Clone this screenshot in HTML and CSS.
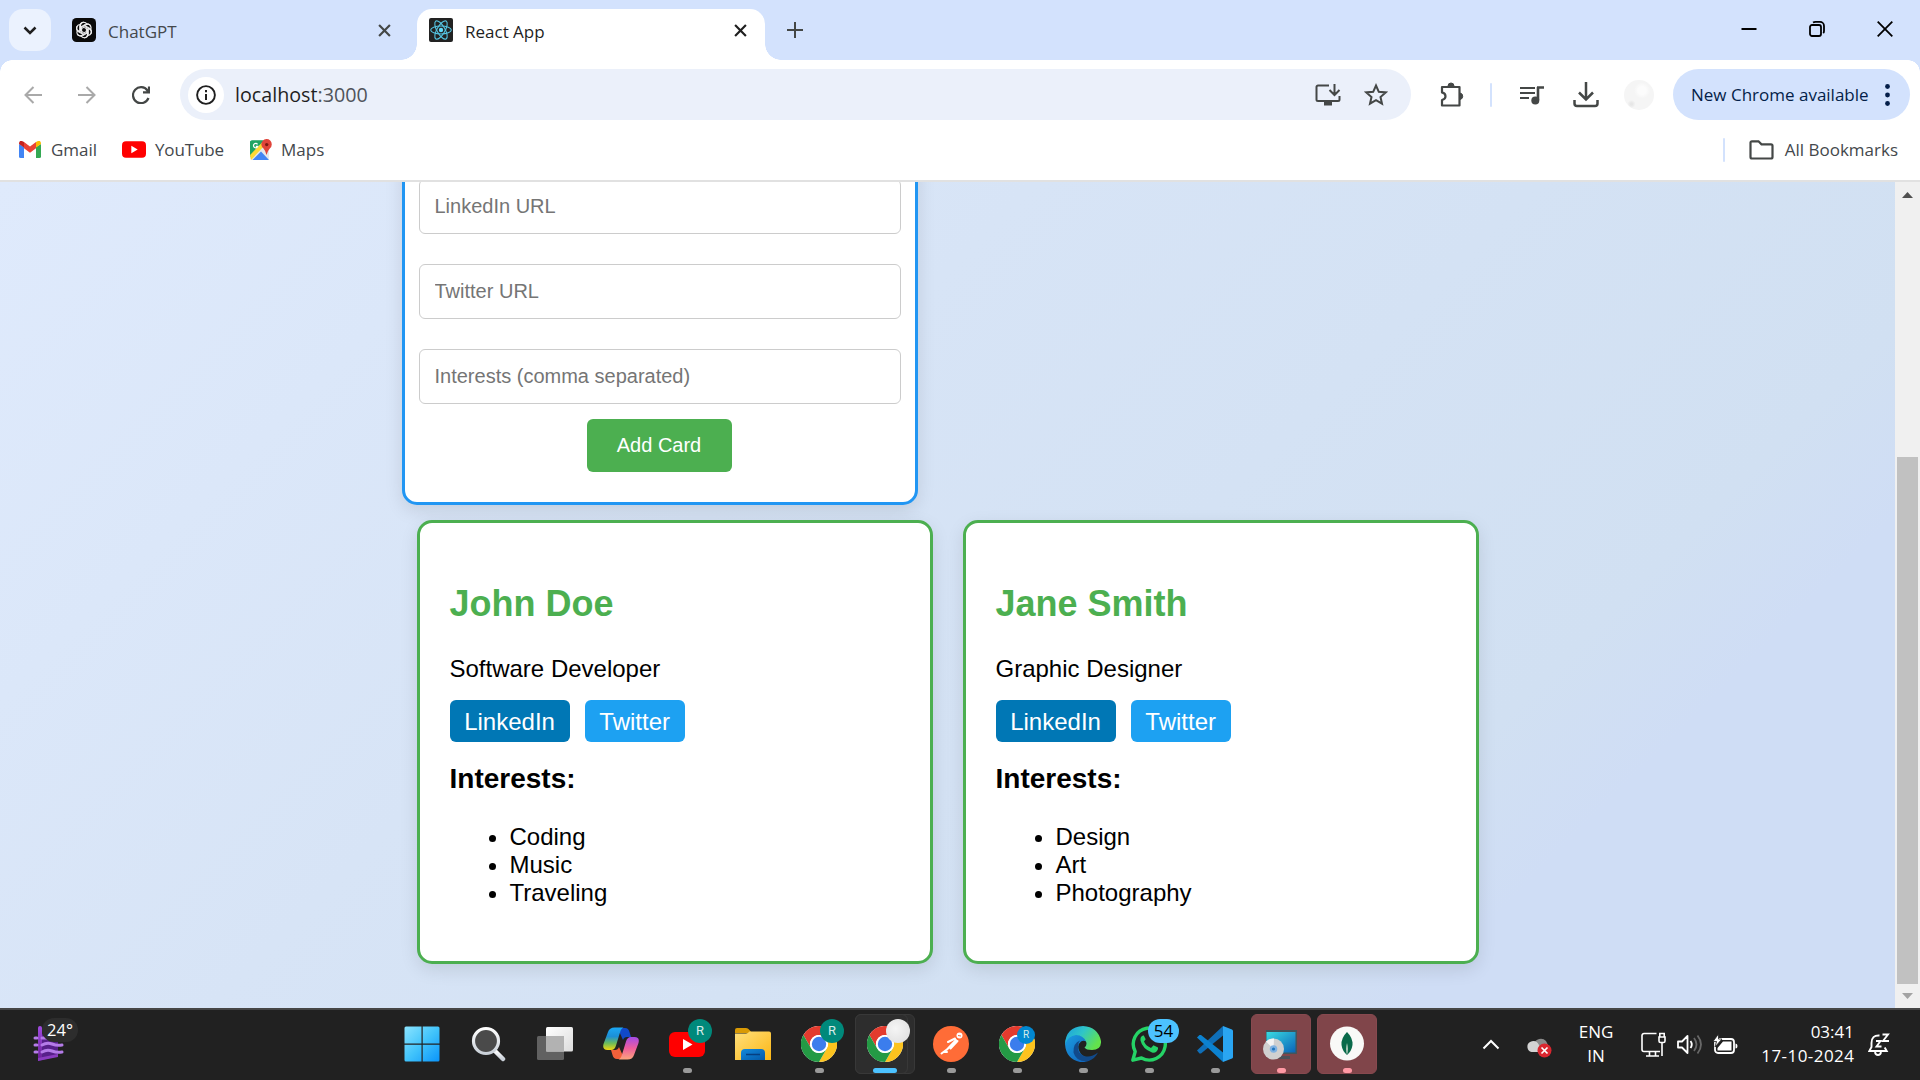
FILE: index.html
```html
<!DOCTYPE html>
<html lang="en">
<head>
<meta charset="utf-8">
<title>React App</title>
<link rel="stylesheet" href="styles.css">
</head>
<body>
<svg class="defs" width="0" height="0" aria-hidden="true">
  <defs>
    <linearGradient id="winG" x1="0" y1="0" x2="1" y2="1"><stop offset="0" stop-color="#8be4ff"/><stop offset=".5" stop-color="#42c4fb"/><stop offset="1" stop-color="#0a94fa"/></linearGradient>
    <linearGradient id="glassG" x1="0" y1="0" x2="0" y2="1"><stop offset="0" stop-color="#fff"/><stop offset="1" stop-color="#c9d0d8"/></linearGradient>
    <linearGradient id="paneG" x1="0" y1="0" x2="1" y2="1"><stop offset="0" stop-color="#fff"/><stop offset="1" stop-color="#dcdcdc"/></linearGradient>
    <linearGradient id="copA" x1="0" y1="0" x2="0" y2="1"><stop offset="0" stop-color="#1ba8f5"/><stop offset=".4" stop-color="#1c8fd6"/><stop offset=".7" stop-color="#6cbb5a"/><stop offset="1" stop-color="#f2d510"/></linearGradient>
    <linearGradient id="copB" x1="0" y1="0" x2="0" y2="1"><stop offset="0" stop-color="#a34be8"/><stop offset=".5" stop-color="#ee5d9c"/><stop offset="1" stop-color="#fca57c"/></linearGradient>
    <linearGradient id="folG" x1="0" y1="0" x2="1" y2="1"><stop offset="0" stop-color="#ffe07c"/><stop offset="1" stop-color="#fcb614"/></linearGradient>
    <linearGradient id="folB" x1="0" y1="0" x2="1" y2="1"><stop offset="0" stop-color="#1289dc"/><stop offset="1" stop-color="#0459a8"/></linearGradient>
    <linearGradient id="edgA" x1="0" y1="0" x2="1" y2=".5"><stop offset="0" stop-color="#1a9ddf"/><stop offset=".5" stop-color="#2fc5c8"/><stop offset="1" stop-color="#63e24c"/></linearGradient>
    <linearGradient id="edgB" x1="0" y1="0" x2="1" y2="1"><stop offset="0" stop-color="#1b9de2"/><stop offset="1" stop-color="#0f5cb5"/></linearGradient>
    <linearGradient id="scrG" x1="0" y1="0" x2="1" y2="1"><stop offset="0" stop-color="#39dbe2"/><stop offset="1" stop-color="#0a63b8"/></linearGradient>
    <linearGradient id="windG" x1="0" y1="0" x2="0" y2="1"><stop offset="0" stop-color="#a04be0"/><stop offset="1" stop-color="#6b1f98"/></linearGradient>
    <symbol id="chrome" viewBox="0 0 36 36">
      <circle cx="18" cy="18" r="18" fill="#fff"/>
      <path d="M18 9H33.6A18 18 0 0 0 2.400 9L10.200 22.500A9 9 0 0 1 18 9z" fill="#e33b2e"/>
      <path d="M25.800 22.500L18 36A18 18 0 0 0 33.600 9H18A9 9 0 0 1 25.800 22.500z" fill="#fcc31e"/>
      <path d="M10.200 22.500L2.400 9A18 18 0 0 0 18 36l7.800-13.500A9 9 0 0 1 10.200 22.500z" fill="#249a45"/>
      <circle cx="18" cy="18" r="9" fill="#fff"/><circle cx="18" cy="18" r="7.200" fill="#3b7ded"/>
    </symbol>
    <symbol id="yt" viewBox="0 0 36 25"><rect width="36" height="25" rx="6" fill="#f00"/><path d="M14 7v11l9.500-5.500z" fill="#fff"/></symbol>
    <symbol id="cross" viewBox="0 0 12 12"><path d="M1 1l10 10M11 1L1 11" fill="none" stroke="currentColor" stroke-width="2"/></symbol>
  </defs>
</svg>

<header class="tabstrip">
  <div class="tab-search"><svg width="14" height="9" viewBox="0 0 14 9"><path d="M1.500 1.500L7 7l5.500-5.500" fill="none" stroke="#1f1f1f" stroke-width="2.500"/></svg></div>
  <div class="tab">
    <svg class="favicon" viewBox="0 0 24 24"><rect width="24" height="24" rx="4.500" fill="#0a0a0a"/>
      <g fill="none" stroke="#f0f0f0" stroke-width="1.100">
        <path id="petal" d="M7.700 13.800V8.200a3.900 3.900 0 0 1 7.300-1.900M9.600 12.900V9.300l4.500-2.600a3.900 3.900 0 0 1 4.700 1"/>
        <use href="#petal" transform="rotate(60 12 12)"/><use href="#petal" transform="rotate(120 12 12)"/><use href="#petal" transform="rotate(180 12 12)"/><use href="#petal" transform="rotate(240 12 12)"/><use href="#petal" transform="rotate(300 12 12)"/>
      </g></svg>
    <span class="tab-title">ChatGPT</span>
    <svg class="close" width="13" height="13"><use href="#cross"/></svg>
  </div>
  <div class="tab active">
    <svg class="favicon" viewBox="0 0 24 24"><rect width="24" height="24" rx="2" fill="#222"/><g fill="none" stroke="#55c5e3" stroke-width="1.100"><ellipse cx="12" cy="12" rx="10.300" ry="4"/><ellipse cx="12" cy="12" rx="10.300" ry="4" transform="rotate(60 12 12)"/><ellipse cx="12" cy="12" rx="10.300" ry="4" transform="rotate(120 12 12)"/></g><circle cx="12" cy="12" r="2.200" fill="#61dafb"/></svg>
    <span class="tab-title">React App</span>
    <svg class="close" width="13" height="13"><use href="#cross"/></svg>
  </div>
  <svg class="new-tab" width="16" height="16" viewBox="0 0 16 16"><path d="M8 0v16M0 8h16" stroke="#444746" stroke-width="2"/></svg>
  <div class="win-controls">
    <svg width="16" height="16" viewBox="0 0 16 16"><path d="M0.500 8h15" stroke="#000" stroke-width="2"/></svg>
    <svg width="16" height="16" viewBox="0 0 16 16" fill="none" stroke="#000" stroke-width="1.800"><rect x="1" y="4" width="11" height="11" rx="2"/><path d="M4 1.500Q5 .9 6.500.9H11a4 4 0 0 1 4 4v5q0 1.500-.8 2.200"/></svg>
    <svg width="16" height="16" viewBox="0 0 16 16"><path d="M.7.700l14.600 14.600M15.300.700L.7 15.300" stroke="#000" stroke-width="1.800"/></svg>
  </div>
</header>

<div class="toolbar">
  <svg class="nav" viewBox="0 0 18 18" fill="none" stroke="#a9a9a9" stroke-width="2"><path d="M18 9H1.500M9.500 1L1.500 9l8 8"/></svg>
  <svg class="nav" viewBox="0 0 18 18" fill="none" stroke="#a9a9a9" stroke-width="2"><path d="M0 9h16.500M8.500 1l8 8-8 8"/></svg>
  <svg class="nav" viewBox="0 0 18 18" fill="none" stroke="#444746" stroke-width="2.200"><path d="M16.500 12A8 8 0 1 1 15.500 4.500l1 1.500M17 .5V6.300H11"/></svg>
  <div class="omnibox">
    <div class="site-info"><svg width="20" height="20" viewBox="0 0 20 20"><circle cx="10" cy="10" r="8.900" fill="none" stroke="#1f1f1f" stroke-width="1.900"/><path d="M10 9v6M10 5v2.200" stroke="#1f1f1f" stroke-width="2"/></svg></div>
    <span class="url">localhost<span class="port">:3000</span></span>
    <svg class="install" width="26" height="22" viewBox="0 0 26 22" fill="none" stroke="#444746" stroke-width="2"><path d="M14 1.500H3a1.500 1.500 0 0 0-1.500 1.500v12.500A1.500 1.500 0 0 0 3 17h20a1.500 1.500 0 0 0 1.500-1.500V12M19.500 0v10M14.500 6l5 5 5-5"/><path d="M9 19.500h8" stroke-width="4"/></svg>
    <svg width="24" height="23" viewBox="0 0 24 23"><path d="M12 2.500l2.800 6.300 6.900.6-5.200 4.600 1.500 6.700-6-3.500-6 3.500 1.500-6.700L2.300 9.400l6.900-.6z" fill="none" stroke="#444746" stroke-width="2"/></svg>
  </div>
  <svg class="ext" width="26" height="26" viewBox="0 0 26 26"><path d="M3 5h17.500v18.500H3v-5.500q3.500-1 3.500-3.800T3 10.400z" fill="none" stroke="#444746" stroke-width="2.200" stroke-linejoin="round"/><path d="M9 4a3 3 0 0 1 6 0zM21 11a3.300 3.300 0 0 1 0 6.500z" fill="#444746" stroke="#444746"/></svg>
  <i class="divider"></i>
  <svg class="media" width="24" height="20" viewBox="0 0 24 20"><path d="M0 3h15M0 8h15M0 13h9" stroke="#444746" stroke-width="2.200"/><path d="M18 2v13M17 2.500h7" stroke="#444746" stroke-width="2.600"/><circle cx="15.300" cy="15.500" r="4" fill="#444746"/></svg>
  <svg class="download" width="26" height="26" viewBox="0 0 26 26" fill="none" stroke="#444746" stroke-width="2.500"><path d="M13 0v17M6 10.500l7 7 7-7M1.500 18v3.500a2.500 2.500 0 0 0 2.500 2.500h18a2.500 2.500 0 0 0 2.500-2.500V18"/></svg>
  <div class="avatar"></div>
  <div class="update"><span>New Chrome available</span><svg width="5" height="22" viewBox="0 0 5 22" fill="#041e49"><circle cx="2.500" cy="2.500" r="2.400"/><circle cx="2.500" cy="11" r="2.400"/><circle cx="2.500" cy="19.500" r="2.400"/></svg></div>
</div>

<nav class="bookmarks">
  <div class="bm bm-gmail"><svg width="22" height="17" viewBox="0 0 22 17"><path d="M0 3v12.500Q0 17 1.500 17H5V6z" fill="#4285f4"/><path d="M22 3v12.500q0 1.500-1.500 1.500H17V6z" fill="#34a853"/><path d="M17 6.500V1l1-.6Q22-1.500 22 3z" fill="#fbbc04"/><path d="M5 6.500V1L4 .4Q0-1.500 0 3z" fill="#c5221f"/><path d="M5 1l6 4.600L17 1v6.200l-6 4.600-6-4.600z" fill="#ea4335"/></svg><span>Gmail</span></div>
  <div class="bm bm-yt"><svg width="24" height="17"><use href="#yt"/></svg><span>YouTube</span></div>
  <div class="bm bm-maps"><svg width="22" height="22" viewBox="0 0 22 22"><rect y="1.500" width="19" height="19.500" rx="2" fill="#e5e8ea"/><path d="M0 3.500a2 2 0 0 1 2-2h13L0 18z" fill="#1fa463"/><path d="M11 12.500l8 8.500H2.500z" fill="#4285f4"/><path d="M0 16L12.500 3l2.500 3L1 21z" fill="#fdd835"/><path d="M0 3.500a2 2 0 0 1 2-2h11L0 15.500z" fill="#1fa463"/><path d="M16.500 16q-.7-4-3-6.500A5.200 5.200 0 1 1 20 9.200Q17.300 12 16.500 16z" fill="#e0443a"/><circle cx="16.700" cy="5.600" r="1.700" fill="#7b1a12"/><path d="M7.500 5.300a2.200 2.200 0 1 0 .3 2H5.800" fill="none" stroke="#fff" stroke-width="1.200"/></svg><span>Maps</span></div>
  <i class="divider"></i>
  <div class="bm bm-all"><svg width="25" height="20" viewBox="0 0 25 20"><path d="M1.500 3A1.500 1.500 0 0 1 3 1.300h6.500l3 3H22a1.500 1.500 0 0 1 1.500 1.500V17a1.500 1.500 0 0 1-1.500 1.500H3A1.500 1.500 0 0 1 1.500 17z" fill="none" stroke="#444746" stroke-width="2.200"/></svg><span>All Bookmarks</span></div>
</nav>

<div class="viewport">
  <main class="page">
    <form class="form-card">
      <input type="text" placeholder="LinkedIn URL">
      <input type="text" placeholder="Twitter URL">
      <input type="text" placeholder="Interests (comma separated)">
      <button type="button">Add Card</button>
    </form>
    <section class="cards">
      <article class="card">
        <h2>John Doe</h2>
        <p>Software Developer</p>
        <div class="socials"><a class="linkedin">LinkedIn</a><a class="twitter">Twitter</a></div>
        <h3>Interests:</h3>
        <ul><li>Coding</li><li>Music</li><li>Traveling</li></ul>
      </article>
      <article class="card">
        <h2>Jane Smith</h2>
        <p>Graphic Designer</p>
        <div class="socials"><a class="linkedin">LinkedIn</a><a class="twitter">Twitter</a></div>
        <h3>Interests:</h3>
        <ul><li>Design</li><li>Art</li><li>Photography</li></ul>
      </article>
    </section>
  </main>
  <div class="scrollbar">
    <svg width="11" height="6" viewBox="0 0 11 6"><path d="M0 6L5.500 0 11 6z" fill="#505050"/></svg>
    <div class="thumb"></div>
    <svg width="11" height="6" viewBox="0 0 11 6"><path d="M0 0l5.500 6L11 0z" fill="#a3a3a3"/></svg>
  </div>
</div>

<footer class="taskbar">
  <div class="weather">
    <svg width="31" height="37" viewBox="0 0 31 37"><path d="M7 4l4 8 14 3v16L5 36z" fill="#57208a"/><path d="M5 3Q5 1 7 1t2 2v30l-4 2z" fill="url(#windG)"/><path d="M5 36v-3l20-4v3z" fill="#8a3cc0"/><g fill="none" stroke="#b47be8" stroke-width="3" stroke-linecap="round"><path d="M2 13h2M9 13h5M2 20h2M9 20q5-3 10-1t10 1M2 27h2M9 27q5-3 10-1t10 1"/></g></svg>
    <span class="temp">24°</span>
  </div>
  <div class="apps">
    <div class="app start"><svg width="36" height="36" viewBox="0 0 36 36" fill="url(#winG)"><path d="M.5 2q0-1.500 1.500-1.500h32q1.500 0 1.500 1.500v32q0 1.500-1.500 1.500H2Q.5 35.500.5 34zM17.500.5v17H.5v1.200h17v16.800h1.200V18.700h16.800v-1.200H18.700V.5z" fill-rule="evenodd"/></svg></div>
    <div class="app"><svg width="36" height="36" viewBox="0 0 36 36"><path d="M24 25l8 8" stroke="url(#glassG)" stroke-width="4.500" stroke-linecap="round"/><circle cx="15" cy="15" r="12.500" fill="#4a4a4a" stroke="url(#glassG)" stroke-width="3.200"/></svg></div>
    <div class="app"><svg width="36" height="36" viewBox="0 0 36 36"><rect x="0" y="10" width="27" height="24" rx="1.500" fill="#616161"/><rect x="9" y="1" width="27" height="24.500" rx="1.500" fill="url(#paneG)"/><path d="M9 10h18v15.500H9z" fill="#b2b2b2"/></svg></div>
    <div class="app"><svg width="36" height="36" viewBox="0 0 36 36"><path d="M11 2h11q3.500 0 4.500 4l1.500 5h-4q-3 0-4 3L16 5z" fill="#1149c8"/><path d="M25 33H14q-3.500 0-4.500-4L8 24h4q3 0 4-3l4 9z" fill="#f2603a"/><path d="M11.500 1.500h9q-2.500 1-3.500 5l-4 13q-1.300 4.500-5 4.500H4.500Q-1 24 .5 18L5 6q1.500-4.500 6.500-4.500z" fill="url(#copA)"/><path d="M24.500 33.500h-9q2.500-1 3.500-5l4-13q1.300-4.500 5-4.500h3.500Q37 11 35.500 17L31 29q-1.500 4.500-6.500 4.500z" fill="url(#copB)"/></svg></div>
    <div class="app run"><svg width="36" height="25"><use href="#yt"/></svg><b class="badge green">R</b></div>
    <div class="app"><svg width="36" height="36" viewBox="0 0 36 36"><path d="M0 4q0-2 2-2h9q2 0 3.500 2L17 7H0z" fill="#d99a05"/><path d="M0 7.500h11q2 0 3.500-2h19.500q2 0 2 2V34H0z" fill="url(#folG)"/><path d="M6 34V27q0-4 4-4h16q4 0 4 4v7z" fill="url(#folB)"/><path d="M11 28.500h14" stroke="#063f80" stroke-width="1.500"/></svg></div>
    <div class="app run"><svg width="36" height="36"><use href="#chrome"/></svg><b class="badge green">R</b></div>
    <div class="app run focused"><i class="tile back"></i><i class="tile"></i><svg width="36" height="36"><use href="#chrome"/></svg><b class="badge photo"></b></div>
    <div class="app run"><svg width="36" height="36" viewBox="0 0 36 36"><circle cx="18" cy="18" r="18" fill="#ff6c37"/><path d="M8.500 27.500l6-4.500M14 23.500l9-9.500M17.500 22.500l7-7.500M15 16l7-3.500M11 26h3" fill="none" stroke="#fff" stroke-width="2" stroke-linecap="round"/><circle cx="26.500" cy="9.500" r="3" fill="#fff"/><path d="M25 9.500l3 .5" stroke="#ff6c37"/></svg></div>
    <div class="app run"><svg width="36" height="36"><use href="#chrome"/></svg><b class="badge blue">R</b></div>
    <div class="app run"><svg width="36" height="36" viewBox="0 0 36 36"><path d="M0 18Q1 7 12 8.500q9 1 11 8-4-3-7-1-4 3-2 9 3 8 14 7Q22 37 15 36 1 33 0 18z" fill="url(#edgB)"/><path d="M13 20q-1 7 6 10 7 2 14-3.500Q30 33 23 35.200 11 36 8.500 26.500 8 17 15 14.500 13 17 13 20z" fill="#114a8b"/><path d="M0 18Q1 1 18 0q15 1 18 15 .5 9-9 9-6 0-7.500-2.500 3-2.500 1.500-6-3-6.500-10-6.500Q3 10 0 18z" fill="url(#edgA)"/></svg></div>
    <div class="app run"><svg width="36" height="36" viewBox="0 0 36 36"><path d="M1.800 34.200l2.400-8.600A16 16 0 1 1 10.500 32z" fill="none" stroke="#25d366" stroke-width="3.400" stroke-linejoin="round"/><path d="M12 9.500q-3 1-2.500 5 2 8.500 11.500 12 4.500 1 6-3.500v-1.500l-4.500-2.300-2.500 2.800q-5-2-7-6.500l1.700-2.300L12.800 9.500z" fill="#25d366"/></svg><b class="badge count">54</b></div>
    <div class="app run"><svg width="36" height="36" viewBox="0 0 36 36"><path d="M0 24.500L26 0v9.500L4 27.500H2.500z" fill="#0f6fb8"/><path d="M0 11.500l2.500-2.500H4l22 17.500V36z" fill="#0c82d0"/><path d="M26 0l9 3.500q1 .5 1 1.500v26q0 1-1 1.500L26 36z" fill="#2aa5f2"/></svg></div>
    <div class="app run alert"><i class="tile"></i><svg width="36" height="36" viewBox="0 0 36 36"><path d="M18 30h9v3H15z" fill="#4b5058"/><rect x="3" y="4" width="31" height="24" fill="#42555c"/><rect x="3.500" y="6" width="29" height="20.500" fill="url(#scrG)"/><circle cx="10.500" cy="23" r="10.500" fill="#d0d0d0"/><path d="M10.500 23L3 15.500a10.500 10.500 0 0 1 8-3z" fill="#f3f3f3"/><circle cx="10.500" cy="23" r="3.800" fill="#7fb2e2"/><circle cx="10.500" cy="23" r="1.600" fill="#1f76c0"/></svg></div>
    <div class="app run alert"><i class="tile"></i><svg width="36" height="36" viewBox="0 0 36 36"><circle cx="18" cy="17.500" r="17" fill="#f9f9f7"/><path d="M18 6q6 6 5.500 13-.8 6-5.500 10-4.700-4-5.500-10Q12 12 18 6z" fill="#0a6a4a"/><path d="M18 17q2 6 0 12-2-6 0-12z" fill="#a9c6b5"/></svg></div>
  </div>
  <div class="tray">
    <svg width="18" height="11" viewBox="0 0 18 11"><path d="M1.500 9.500L9 2l7.500 7.500" fill="none" stroke="#fff" stroke-width="2"/></svg>
    <svg class="cloud" width="26" height="22" viewBox="0 0 26 22"><path d="M8 8a7 7 0 0 1 12-3l3 6-13 4z" fill="#8b8b8b"/><path d="M5.500 16A5.500 5.500 0 0 1 4 6q6-3 9 3l7 7z" fill="#d3d3d3"/><circle cx="18.500" cy="14.500" r="7" fill="#d9262f"/><path d="M15.500 11.500l6 6M21.500 11.500l-6 6" stroke="#fff" stroke-width="1.700"/></svg>
    <span class="lang">ENG<br>IN</span>
    <svg width="25" height="25" viewBox="0 0 25 25" fill="none" stroke="#fff" stroke-width="1.600"><path d="M15.500 1.500H3A2 2 0 0 0 1 3.500v14a2 2 0 0 0 2 2h16M8.500 20v3.500M14.500 20v3.500M5 24h13M21 10.500V24"/><path d="M18 5h6v4q0 1.500-1.500 1.500h-3Q18 10.500 18 9zM18.800 5V1.500h4.400V5"/></svg>
    <svg width="25" height="21" viewBox="0 0 25 21" fill="none" stroke="#fff" stroke-width="1.800" stroke-linejoin="round"><path d="M1 7.500h4l5.500-5.500v17L5 13.500H1zM13.500 7q2.500 3.500 0 7"/><path d="M17 4q5 6.500 0 13M20.500 1.500q7 9 0 18" stroke="#686868"/></svg>
    <svg width="25" height="21" viewBox="0 0 25 21"><rect x="2" y="5" width="19" height="14" rx="3" fill="none" stroke="#fff" stroke-width="1.800"/><path d="M4.500 16.500V14L10 7.500h8.500v9zM22.500 9.500q2 0 2 2.500t-2 2.500z" fill="#fff"/><path d="M5.500 0L0 7.500h3.500L2 13l7-8H5.500z" fill="#fff" stroke="#222" stroke-width=".8"/></svg>
    <span class="clock">03:41<br><span class="date">17-10-2024</span></span>
    <svg width="22" height="24" viewBox="0 0 22 24" fill="none" stroke="#fff" stroke-width="1.900"><path d="M11.500 3.500Q3.500 3 3.500 11v4L1.300 19h17.400l-2-3.500M7 20q.5 3 3 3t3-3"/><path d="M8 9h4.500L8.500 14.500h5M14.500 2.500H20L15 9h6"/></svg>
  </div>
</footer>
</body>
</html>
```

FILE: styles.css
```css
* { box-sizing: border-box; }
body {
  margin: 0;
  width: 1920px;
  height: 1080px;
  overflow: hidden;
  display: flex;
  flex-direction: column;
  background: #fff;
  font-family: "Open Sans", "Noto Sans", sans-serif;
  font-size: 17px;
  color: #44484c;
}
svg { display: block; flex: none; }
.defs { position: absolute; }
i { font-style: normal; }

/* Tabs */
.tabstrip {
  height: 60px;
  flex: none;
  display: flex;
  padding: 9px 27px 0 9px;
  background: #d3e2fd;
}
.tab-search {
  width: 42px;
  height: 42px;
  border-radius: 14px;
  background: #ebf2fe;
  display: grid;
  place-items: center;
}
.tab {
  position: relative;
  display: flex;
  align-items: flex-start;
  width: 348px;
  height: 51px;
  padding: 9px 18px 0 12px;
}
.tab:not(.active) { width: 357px; margin-left: 9px; padding-right: 26px; }
.tab.active { background: #fff; border-radius: 15px 15px 0 0; }
.tab.active::before, .tab.active::after {
  content: "";
  position: absolute;
  bottom: 0;
  width: 16px;
  height: 16px;
}
.tab.active::before { left: -16px; background: radial-gradient(circle at 0 0, transparent 15.500px, #fff 16px); }
.tab.active::after { right: -16px; background: radial-gradient(circle at 100% 0, transparent 15.500px, #fff 16px); }
.favicon { width: 24px; height: 24px; }
.tab-title { margin-left: 12px; line-height: 27px; white-space: nowrap; }
.active .tab-title { color: #1f1f1f; }
.close { margin: 6px 0 0 auto; color: #444746; }
.active .close { color: #1f1f1f; }
.new-tab { margin: 13px 0 0 22px; }
.win-controls { margin: 12px 0 0 auto; display: flex; gap: 52px; }

/* Toolbar, with rounded top corners over the tab strip colour */
.toolbar {
  height: 69px;
  flex: none;
  display: flex;
  align-items: center;
  padding: 0 10px 0 24px;
  background:
    radial-gradient(circle at 12px 12px, #fff 11.500px, #d3e2fd 12px) 0 0 / 12px 12px no-repeat,
    radial-gradient(circle at 0 12px, #fff 11.500px, #d3e2fd 12px) 100% 0 / 12px 12px no-repeat,
    #fff;
}
.nav { width: 18px; height: 18px; margin-right: 36px; }
.nav:nth-child(3) { margin-right: 30px; }
.omnibox {
  width: 1231px;
  height: 51px;
  border-radius: 26px;
  background: #ebf0fa;
  display: flex;
  align-items: center;
  padding: 0 23px 0 8px;
}
.site-info { width: 36px; height: 36px; border-radius: 50%; background: #fff; display: grid; place-items: center; }
.url { margin-left: 11px; font-size: 19.700px; line-height: 30px; color: #1f1f1f; }
.port { color: #50545a; }
.install { margin: 0 23px 0 auto; }
.ext { margin-left: 28px; }
.divider { width: 2px; height: 24px; background: #d3e2fd; flex: none; border-radius: 1px; }
.toolbar .divider { margin-left: 25px; }
.media { margin-left: 28px; }
.download { margin-left: 29px; }
.avatar {
  width: 30px;
  height: 30px;
  border-radius: 50%;
  margin-left: 25px;
  flex: none;
  background: radial-gradient(circle at 25% 80%, #e6e6e6 0 1px, transparent 4px), radial-gradient(circle at 60% 35%, #fcfcfc 0 4px, transparent 8px), #f5f5f5;
}
.update {
  margin-left: auto;
  width: 237px;
  height: 51px;
  border-radius: 26px;
  background: #d3e2fd;
  color: #041e49;
  display: flex;
  align-items: center;
  justify-content: space-between;
  padding: 0 20px 0 18px;
  white-space: nowrap;
}

/* Bookmarks */
.bookmarks {
  height: 53px;
  flex: none;
  display: flex;
  align-items: center;
  padding: 0 22px 10px 19px;
  border-bottom: 2px solid #e1e1e1;
}
.bm { display: flex; align-items: center; gap: 10px; white-space: nowrap; }
.bm-gmail { width: 103px; }
.bm-yt { width: 128px; gap: 9px; }
.bm-yt span { letter-spacing: -.15px; }
.bm-maps { gap: 9px; }
.bookmarks .divider { margin-left: auto; margin-right: 24px; }
.bm-all { gap: 11px; }

/* Page */
.viewport { height: 826px; flex: none; display: flex; }
.page {
  flex: 1;
  overflow: hidden;
  background: linear-gradient(135deg, #dfeafc 0%, #d7e4f6 38%, #d1e0f2 75%, #cfddf5 82%, #cfddf5 100%);
  font-family: "Liberation Sans", Arial, sans-serif;
  font-size: 24px;
  line-height: 28px;
  color: #000;
}
.form-card, .card {
  width: 516px;
  background: #fff;
  border: 3px solid #4caf50;
  border-radius: 15px;
  box-shadow: 0 6px 18px rgba(0, 0, 0, .1);
}
.form-card {
  height: 356px;
  margin: -33px 0 15px 402px;
  padding: 27px 14px 30px;
  border-color: #2196f3;
  display: flex;
  flex-direction: column;
  align-items: center;
}
.form-card input {
  width: 482px;
  height: 55px;
  flex: none;
  margin: 0 0 30px;
  padding: 15px 15px 15px 14.500px;
  border: 1px solid #ccc;
  border-radius: 6px;
  font: 20px "Liberation Sans", Arial, sans-serif;
}
.form-card input:last-of-type { margin-bottom: 15px; }
.form-card button {
  width: 145px;
  height: 53px;
  flex: none;
  margin-right: 2px;
  border: 0;
  border-radius: 6px;
  background: #4caf50;
  color: #fff;
  font: 20px "Liberation Sans", Arial, sans-serif;
}
.cards { display: flex; gap: 30px; margin-left: 417px; }
.card { height: 444px; padding: 30px 29.500px; }
.card h2 { margin: 30px 0; font-size: 36px; line-height: 41px; color: #4caf50; }
.card p { margin: 31px 0 17px; }
.card h2 + p { margin-top: 31px; }
.card h3 { margin: 21px 0 28px; font-size: 28px; line-height: 32px; }
.card ul { margin: 0; padding-left: 60px; }
.socials { display: flex; gap: 15px; }
.socials a { height: 42px; padding: 0 14.700px; line-height: 43px; border-radius: 6px; color: #fff; }
.linkedin { background: #0077b5; }
.twitter { background: #1da1f2; }
.scrollbar {
  width: 25px;
  flex: none;
  background: #f0f0f0;
  display: flex;
  flex-direction: column;
  align-items: center;
  padding: 10px 0 9px;
}
.thumb { width: 21px; height: 527px; margin: auto 0 9px; background: #c1c1c1; }

/* Taskbar */
.taskbar {
  height: 72px;
  flex: none;
  display: flex;
  border-top: 2px solid #464646;
  background: #212121;
  color: #fff;
}
.weather { position: relative; width: 390px; padding: 15px 0 0 33px; }
.temp {
  position: absolute;
  left: 42px;
  top: 8px;
  width: 36px;
  height: 24px;
  border-radius: 12px;
  background: #2d2d2d;
  font-size: 16.500px;
  line-height: 24px;
  text-align: center;
}
.apps { display: flex; }
.app { position: relative; width: 66px; height: 68px; display: grid; place-items: center; }
.app svg { position: relative; }
.start { padding-right: 3px; }
.run::after {
  content: "";
  position: absolute;
  bottom: 5px;
  left: 29px;
  width: 9px;
  height: 5px;
  border-radius: 3px;
  background: #9a9a9a;
}
.focused::after { left: 21px; width: 24px; background: #4cc2ff; }
.alert::after { background: #ff99a4; }
.tile { position: absolute; left: 3px; top: 4px; width: 60px; height: 60px; border-radius: 6px; }
.focused .tile { width: 53px; background: #2d2d2d; border: 1px solid #383838; }
.focused .tile.back { width: 60px; }
.alert .tile { background: #80454a; border: 1px solid #87494f; }
.badge {
  position: absolute;
  left: 34px;
  top: 9px;
  width: 24px;
  height: 24px;
  border-radius: 12px;
  font: 13px/24px Roboto, sans-serif;
  text-align: center;
  color: #d8ece8;
}
.green { background: #00897b; }
.photo { background: radial-gradient(circle at 40% 40%, #f5f5f5, #dcdcdc); }
.blue { background: #0288d1; left: 33px; top: 16px; width: 18px; height: 18px; font-size: 10px; line-height: 18px; }
.count { left: 32px; width: 31px; background: #4cc2ff; color: #000; font: 17px/24px "Open Sans", sans-serif; }
.tray {
  display: grid;
  grid-template-columns: 40px 56px 58px 10px 36px 36px 36px 111px 50px;
  justify-items: center;
  align-items: center;
  margin-left: 91px;
  height: 68px;
}
.tray .lang { grid-column: 3; }
.tray .lang + svg { grid-column: 5; }
.cloud { margin-top: 5px; }
.lang, .clock { font-size: 17px; line-height: 24px; text-align: center; white-space: nowrap; }
.clock { text-align: right; justify-self: end; }
.date { letter-spacing: .45px; margin-right: -.45px; }
```
